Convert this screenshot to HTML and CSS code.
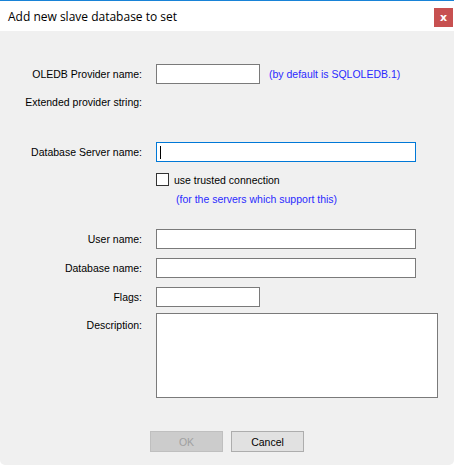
FILE: index.html
```html
<!DOCTYPE html>
<html>
<head>
<meta charset="utf-8">
<link rel="stylesheet" href="styles.css">
</head>
<body>
<div class="window">
  <div class="titlebar">
    <span class="title">Add new slave database to set</span>
    <span class="close">x</span>
  </div>
  <div class="form">
    <div class="row r1">
      <span class="label">OLEDB Provider name:</span>
      <span class="field short"></span>
      <span class="hint">(by default is SQLOLEDB.1)</span>
    </div>
    <div class="row r2">
      <span class="label">Extended provider string:</span>
    </div>
    <div class="row r3">
      <span class="label">Database Server name:</span>
      <span class="field long focused"><span class="caret"></span></span>
    </div>
    <div class="row r4">
      <span class="label"></span>
      <span class="checkbox"></span>
      <span class="cblabel">use trusted connection</span>
    </div>
    <div class="row r5">
      <span class="label"></span>
      <span class="hint hint2">(for the servers which support this)</span>
    </div>
    <div class="row r6">
      <span class="label">User name:</span>
      <span class="field long"></span>
    </div>
    <div class="row r7">
      <span class="label">Database name:</span>
      <span class="field long"></span>
    </div>
    <div class="row r8">
      <span class="label">Flags:</span>
      <span class="field short"></span>
    </div>
    <div class="row r9">
      <span class="label desc">Description:</span>
      <span class="field area"></span>
    </div>
    <div class="buttons">
      <span class="btn disabled">OK</span>
      <span class="btn">Cancel</span>
    </div>
  </div>
</div>
</body>
</html>
```

FILE: styles.css
```css
html, body {
  margin: 0;
  padding: 0;
  background: #ffffff;
}
.window {
  width: 454px;
  height: 465px;
  box-sizing: border-box;
  border-top: 1px solid #1883d7;
  background: #f0f0f0;
  border-radius: 0 0 5px 5px;
  font-family: "Liberation Sans", Arial, sans-serif;
  font-size: 10.5px;
  color: #000;
  overflow: hidden;
}
.titlebar {
  height: 30px;
  background: #ffffff;
  display: flex;
  align-items: flex-start;
  justify-content: space-between;
}
.title {
  font-family: "Open Sans", "Noto Sans", sans-serif;
  font-size: 12px;
  margin-left: 8px;
  margin-top: 7px;
  color: #000;
}
.close {
  width: 19px;
  height: 19px;
  margin-top: 7px;
  margin-right: 1px;
  background: #c75050;
  color: #fff;
  font-weight: bold;
  font-size: 11px;
  display: flex;
  align-items: center;
  justify-content: center;
  font-family: "DejaVu Sans", sans-serif;
  line-height: 1;
}
.form {
  display: flex;
  flex-direction: column;
}
.row {
  display: flex;
  align-items: center;
  height: 20px;
}
.label {
  width: 142px;
  flex: none;
  text-align: right;
  margin-right: 14px;
}
.field {
  box-sizing: border-box;
  height: 20px;
  background: #fff;
  border: 1px solid #7a7a7a;
  display: flex;
  align-items: center;
}
.field.short { width: 104px; }
.field.long { width: 260px; }
.field.focused { border-color: #0078d7; }
.caret {
  width: 1px;
  height: 13px;
  background: #000;
  margin-left: 3px;
}
.field.area {
  width: 282px;
  height: 85px;
}
.hint {
  color: #2a2aff;
  margin-left: 9px;
}
.hint2 { margin-left: 20px; }
.r1 { margin-top: 33px; }
.r2 { margin-top: 8px; }
.r3 { margin-top: 30px; }
.r4 { margin-top: 11px; height: 13px; }
.r5 { margin-top: 6px; height: 14px; }
.r6 { margin-top: 23px; }
.r7 { margin-top: 9px; }
.r8 { margin-top: 9px; }
.r9 { margin-top: 6px; height: 85px; align-items: flex-start; }
.label.desc { margin-top: 6px; }
.checkbox {
  box-sizing: border-box;
  width: 13px;
  height: 13px;
  background: #fff;
  border: 1px solid #333;
}
.cblabel { margin-left: 5px; }
.buttons {
  display: flex;
  gap: 8px;
  margin-top: 33px;
  margin-left: 150px;
}
.btn {
  box-sizing: border-box;
  width: 73px;
  height: 21px;
  background: #e1e1e1;
  border: 1px solid #adadad;
  display: flex;
  align-items: center;
  justify-content: center;
}
.btn.disabled {
  background: #cccccc;
  border-color: #bfbfbf;
  color: #a0a0a0;
}
```
